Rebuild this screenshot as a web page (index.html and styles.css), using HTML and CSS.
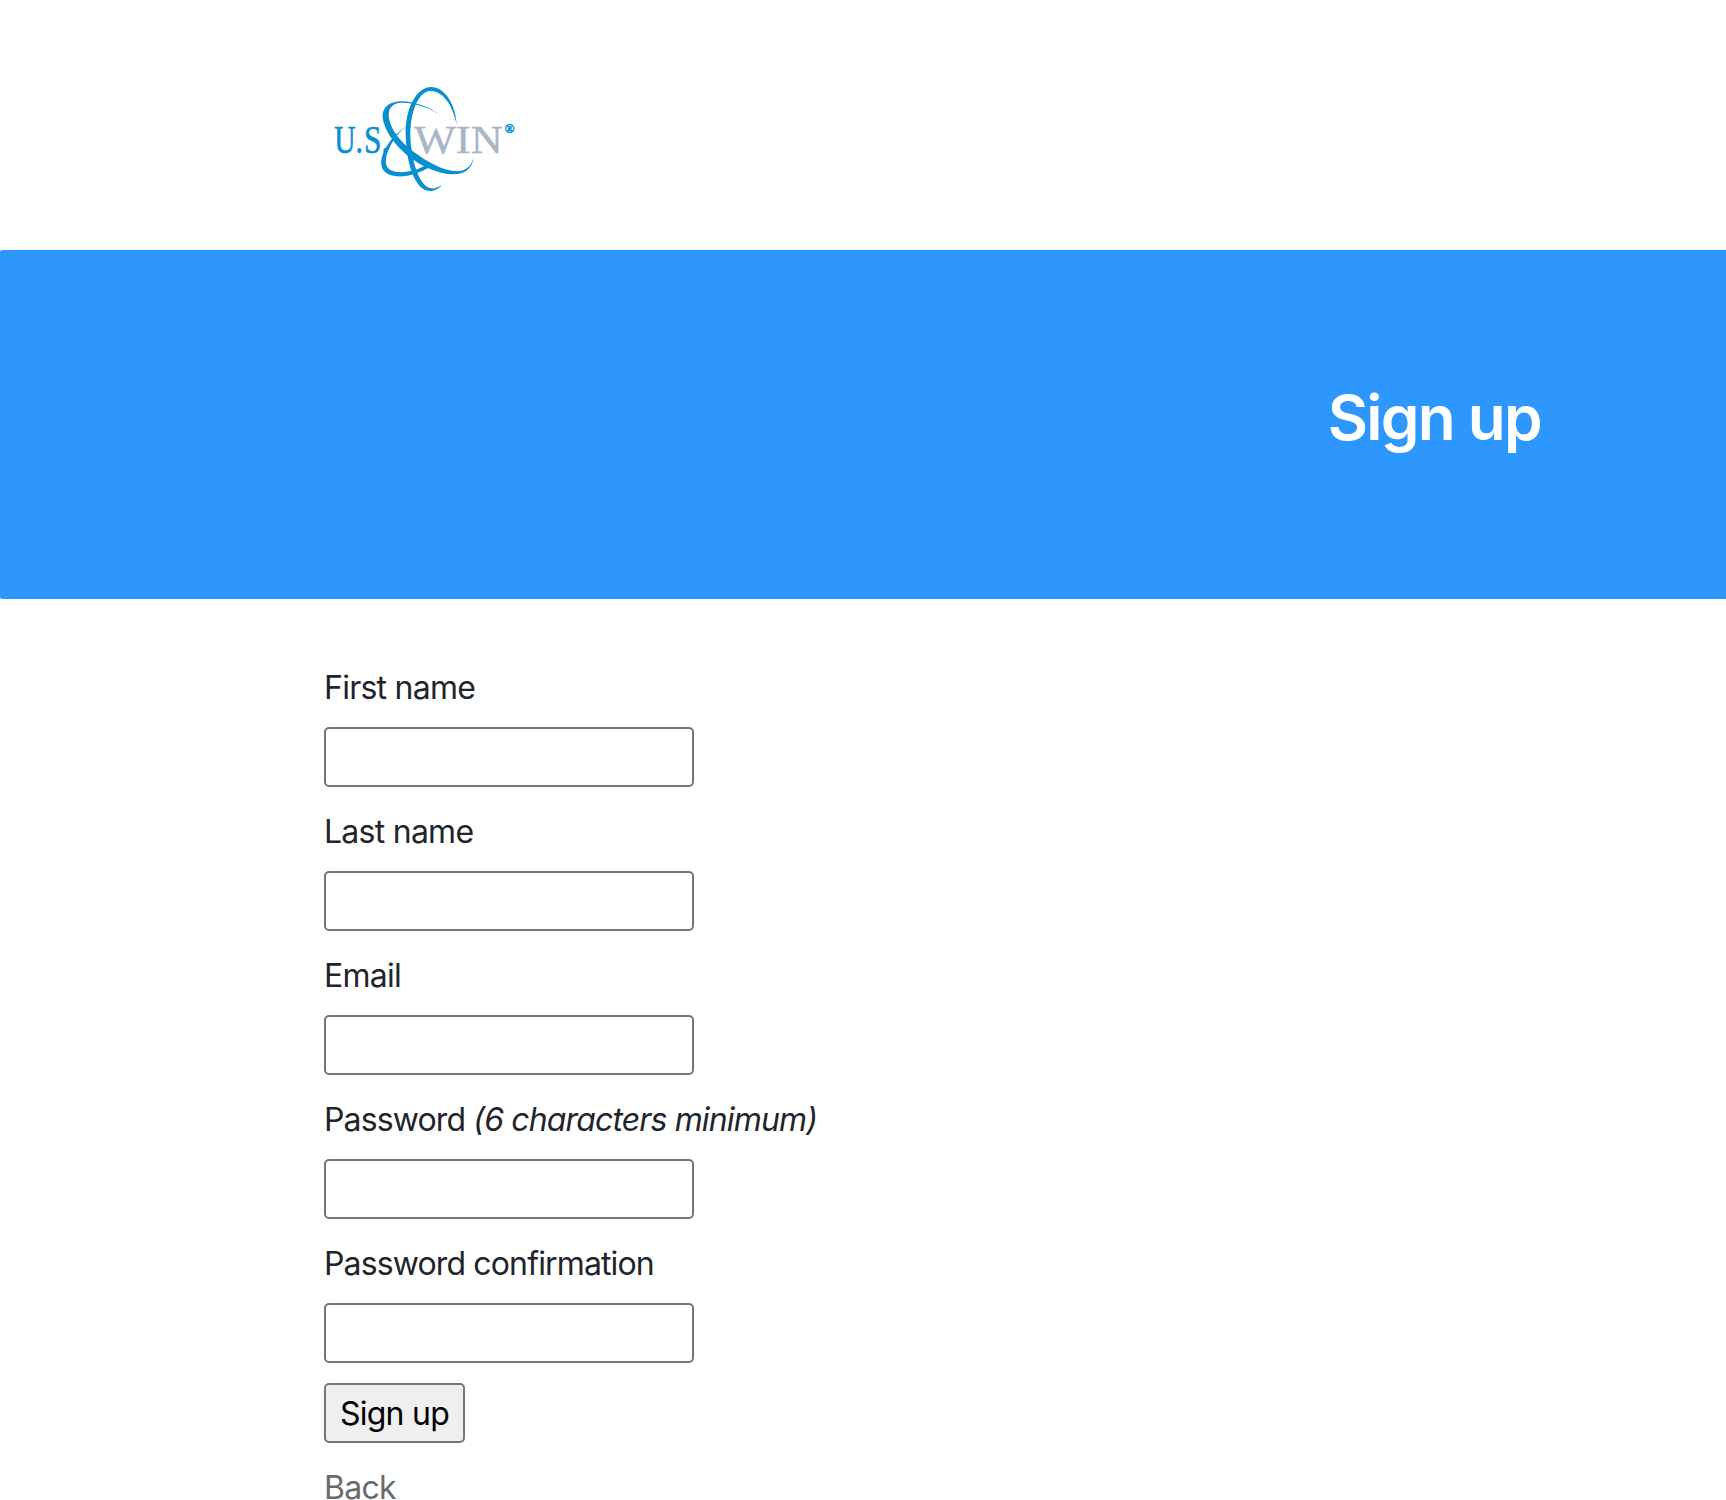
FILE: index.html
```
<!DOCTYPE html>
<html lang="en">
<head>
<meta charset="utf-8">
<title>Sign up</title>
<link rel="stylesheet" href="styles.css">
</head>
<body>
<header class="header">
  <svg class="logo" viewBox="0 0 630 390" role="img" aria-label="U.S. WIN">
    <g class="logo-blue">
      <text class="logo-text" x="43" y="234" font-size="120" textLength="86" lengthAdjust="spacingAndGlyphs">U.</text>
      <text class="logo-text" x="132" y="234" font-size="120" textLength="76" lengthAdjust="spacingAndGlyphs">S.</text>
      <path d="M258 155C225 175 180 225 184 270C188 305 240 310 275 299C300 292 320 282 335 272L322 268C290 288 245 297 218 288C190 277 195 245 210 215C222 190 240 168 258 155Z"/>
    </g>
    <text class="logo-gray" x="282" y="234" font-size="120" textLength="266" lengthAdjust="spacingAndGlyphs">WIN</text>
    <g class="logo-blue">
      <path d="M365 122C320 90 265 74 230 80C190 86 182 115 192 145C208 200 268 257 330 282C380 304 455 312 461 246C450 298 400 298 345 270C290 243 227 195 211 145C200 112 208 90 235 84C275 79 325 97 365 122Z"/>
      <path d="M410 150C408 90 375 36 333 36C290 36 256 100 257 175C258 265 285 348 330 348C345 348 358 340 366 330C352 338 345 341 335 340C300 338 273 260 271 180C271 105 298 49 330 48C365 47 398 85 410 150Z"/>
      <text class="logo-text" x="554" y="173" font-size="40" textLength="29" lengthAdjust="spacingAndGlyphs">®</text>
    </g>
  </svg>
</header>
<section class="banner"><h1 class="banner-title">Sign up</h1></section>
<form class="form">
  <div class="field"><label class="label" for="first">First name</label><input class="input" id="first" type="text"></div>
  <div class="field"><label class="label" for="last">Last name</label><input class="input" id="last" type="text"></div>
  <div class="field"><label class="label" for="email">Email</label><input class="input" id="email" type="email"></div>
  <div class="field"><div class="label label-tight"><label for="pass">Password</label> <em class="hint">(6 characters minimum)</em></div><input class="input" id="pass" type="password"></div>
  <div class="field"><label class="label label-tight" for="confirm">Password confirmation</label><input class="input" id="confirm" type="password"></div>
  <button class="submit" type="button">Sign up</button>
  <a class="back">Back</a>
</form>
</body>
</html>
```
FILE: styles.css
```
* { box-sizing: border-box; }
body {
  margin: 0;
  height: 1500px;
  overflow: hidden;
  background: #fff;
  color: #212529;
  font: 400 32px/48px Inter, "Liberation Sans", sans-serif;
  letter-spacing: -0.74px;
}
.header { height: 250px; padding: 75px 0 0 320px; }
.logo {
  display: block;
  width: 210px;
  height: 130px;
  font-family: "Liberation Serif", serif;
  letter-spacing: 0;
}
.logo-blue { fill: #078fd0; }
.logo-text { stroke: #078fd0; stroke-width: 2px; }
.logo-gray { fill: #a9b6c7; stroke: #a9b6c7; stroke-width: 1px; }
.banner {
  display: flex;
  justify-content: flex-end;
  height: 349px;
  padding: 129px 185px 0 0;
  background: #2e97fd;
  border-radius: 3px 0 0 3px / 2px 0 0 2px;
}
.banner-title {
  margin: 0;
  color: #fff;
  font-size: 62px;
  font-weight: 600;
  line-height: 78px;
  letter-spacing: -1.75px;
}
.form {
  display: flex;
  flex-direction: column;
  align-items: flex-start;
  gap: 20px;
  padding: 64px 0 0 324px;
}
.field { display: flex; flex-direction: column; }
.label { display: block; padding: 1px 0 15px; white-space: nowrap; }
.label-tight { letter-spacing: -0.86px; }
.input {
  width: 370px;
  height: 60px;
  border: 2px solid #767676;
  border-radius: 5px;
  background: #fff;
  font: inherit;
}
.submit {
  width: 141px;
  height: 60px;
  padding: 2px 0 0;
  border: 2px solid #767676;
  border-radius: 5px;
  background: #efefef;
  color: #000;
  font: inherit;
  letter-spacing: inherit;
}
.back { padding-top: 1px; color: #6a6a6a; }
```
